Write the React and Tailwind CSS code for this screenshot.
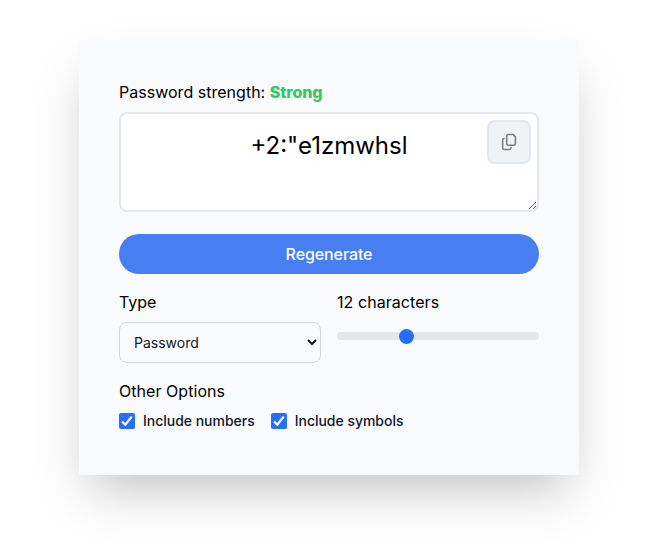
import { useState } from "react";

function CopyIcon() {
  return (
    <svg width="16" height="18" viewBox="0 0 16 18" fill="none" stroke="#7b7b7b" strokeWidth="1.5" strokeLinecap="round" strokeLinejoin="round">
      <path d="M7.1 1.6h5.2l2.1 2.1v7.1a1.4 1.4 0 0 1-1.4 1.4H7.1a1.4 1.4 0 0 1-1.4-1.4V3a1.4 1.4 0 0 1 1.4-1.4Z" />
      <path d="M3 5.6a1.3 1.3 0 0 0-1.3 1.3V15A1.4 1.4 0 0 0 3.1 16.4h5.2A1.6 1.6 0 0 0 10 14.8" />
    </svg>
  );
}

function Option({ label }) {
  const [checked, setChecked] = useState(true);
  return (
    <label className="flex items-center text-sm font-medium tracking-[-0.02px] text-gray-900">
      <input
        type="checkbox"
        checked={checked}
        onChange={(e) => setChecked(e.target.checked)}
        className="peer sr-only"
      />
      <span className="mr-2 flex h-4 w-4 items-center justify-center rounded-[2px] bg-[#256fff]">
        <svg width="16" height="16" viewBox="0 0 16 16" fill="none" stroke="white" strokeWidth="2.2">
          {checked && <path d="M3 8.5 6.3 11.6 12.7 3.6" />}
        </svg>
      </span>
      {label}
    </label>
  );
}

export default function App() {
  const [length, setLength] = useState(12);
  return (
    <main className="h-[552px] w-[665px] overflow-hidden bg-white pt-10 pl-[79px] font-['Inter',sans-serif] text-base text-black">
      <section className="h-[435px] w-[500px] bg-[#f9fafc] p-10 shadow-2xl">
        <p className="mb-2 tracking-[0.02px]">
          Password strength: <span className="font-extrabold tracking-[-0.1px] text-[#34c766]">Strong</span>
        </p>
        <div className="relative h-[100px]">
          <textarea
            defaultValue={'+2:"e1zmwhsl'}
            className="block h-[100px] w-full overflow-hidden rounded-lg border-2 border-gray-200 bg-white px-4 py-4 text-center text-2xl leading-8 outline-none"
          />
          <button className="absolute top-2 right-2 flex h-11 w-11 items-center justify-center rounded-lg border-2 border-[#e2e8f0] bg-[#f1f2f6]">
            <CopyIcon />
          </button>
        </div>
        <button className="mt-[22px] block h-10 w-full rounded-full bg-[#477ef2] font-medium tracking-[-0.1px] text-white">
          Regenerate
        </button>
        <div className="mt-4 grid grid-cols-2 gap-4">
          <div>
            <p className="mb-2">Type</p>
            <select className="block h-[41px] w-full rounded-lg border border-gray-300 bg-[#f9fafc] p-2.5 text-sm text-gray-900">
              <option>Password</option>
            </select>
          </div>
          <div>
            <p className="mb-[18px] tracking-[0.06px]">{length} characters</p>
            <input
              type="range"
              min="6"
              max="24"
              value={length}
              onChange={(e) => setLength(Number(e.target.value))}
              className="block h-2 w-full appearance-none rounded-lg bg-gray-200 [&::-webkit-slider-thumb]:h-[15px] [&::-webkit-slider-thumb]:w-[15px] [&::-webkit-slider-thumb]:appearance-none [&::-webkit-slider-thumb]:rounded-full [&::-webkit-slider-thumb]:bg-[#256fff]"
            />
          </div>
        </div>
        <p className="mt-4 tracking-[0.05px]">Other Options</p>
        <div className="mt-2 flex gap-4">
          <Option label="Include numbers" />
          <Option label="Include symbols" />
        </div>
      </section>
    </main>
  );
}
